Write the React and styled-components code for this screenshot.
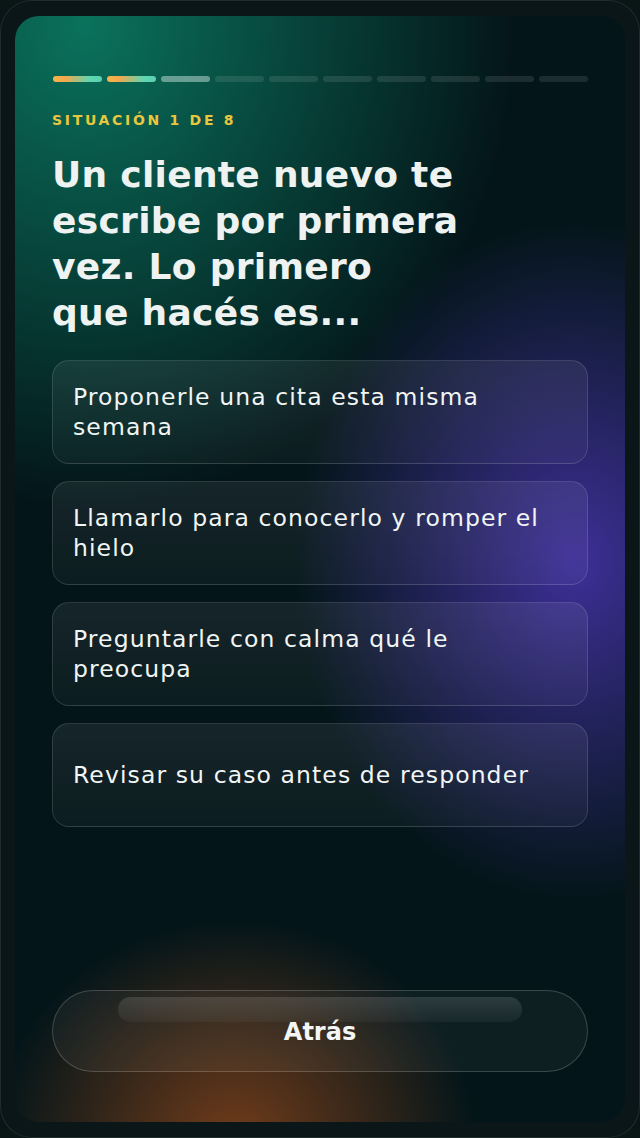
import React from "react";
import styled, { createGlobalStyle } from "styled-components";

const GlobalStyle = createGlobalStyle`
  html, body {
    margin: 0;
    padding: 0;
    background: #0a1516;
  }
  body {
    font-family: "DejaVu Sans", "Noto Sans", sans-serif;
    -webkit-font-smoothing: antialiased;
  }
`;

const Frame = styled.div`
  box-sizing: border-box;
  width: 640px;
  height: 1138px;
  padding: 15px 14px 15px 14px;
  border-radius: 32px;
  border: 1.5px solid rgba(255, 255, 255, 0.09);
  background: #0a1617;
  display: flex;
`;

const Card = styled.main`
  flex: 1;
  box-sizing: border-box;
  border-radius: 24px;
  padding: 60px 37px 50px 37px;
  display: flex;
  flex-direction: column;
  overflow: hidden;
  background:
    radial-gradient(ellipse 240px 220px at 220px 1125px, rgba(125, 64, 26, 0.9), rgba(125, 64, 26, 0) 100%),
    radial-gradient(ellipse 280px 340px at 560px 545px, rgba(68, 50, 165, 0.9), rgba(68, 50, 165, 0) 100%),
    radial-gradient(ellipse 430px 480px at 70px 10px, rgba(10, 114, 92, 1), rgba(10, 114, 92, 0) 100%),
    #041519;
`;

const Progress = styled.div`
  display: flex;
  gap: 5px;
  margin: 0 0 0 1px;
`;

const Segment = styled.div`
  flex: 1;
  height: 6px;
  border-radius: 3px;
  background: ${(p) =>
    p.$state === "done"
      ? "linear-gradient(90deg, #f6b54a 0%, #f2a84c 25%, #5fd6b2 75%, #5ccfb0 100%)"
      : p.$state === "current"
      ? "rgba(200, 225, 220, 0.5)"
      : "rgba(255, 255, 255, 0.1)"};
`;

const Label = styled.div`
  margin-top: 28px;
  color: #e9c63d;
  font-size: 14px;
  font-weight: 700;
  letter-spacing: 2.7px;
  line-height: 20px;
`;

const Question = styled.h1`
  margin: 22px 0 0 0;
  color: #eef3f1;
  font-size: 36px;
  font-weight: 700;
  line-height: 46px;
  letter-spacing: 0.3px;
`;

const Options = styled.div`
  margin-top: 24px;
  display: flex;
  flex-direction: column;
  gap: 17px;
`;

const Option = styled.button`
  box-sizing: border-box;
  min-height: 104px;
  padding: 0 20px;
  display: flex;
  align-items: center;
  text-align: left;
  border-radius: 17px;
  border: 1.5px solid rgba(255, 255, 255, 0.13);
  background: linear-gradient(180deg, rgba(255, 255, 255, 0.07), rgba(255, 255, 255, 0.035));
  color: #f1f5f3;
  font-family: "DejaVu Sans", "Noto Sans", sans-serif;
  font-size: 23.5px;
  font-weight: 400;
  letter-spacing: 1.1px;
  line-height: 30px;
  cursor: pointer;
`;

const Spacer = styled.div`
  flex: 1;
`;

const BackButton = styled.button`
  position: relative;
  box-sizing: border-box;
  height: 82px;
  border-radius: 41px;
  border: 1.5px solid rgba(255, 255, 255, 0.18);
  background: rgba(255, 255, 255, 0.045);
  color: #f4f6f5;
  font-family: "DejaVu Sans", "Noto Sans", sans-serif;
  font-size: 24px;
  font-weight: 700;
  cursor: pointer;
  display: flex;
  align-items: center;
  justify-content: center;
  padding-top: 2px;
`;

const Shine = styled.span`
  position: absolute;
  top: 6px;
  left: 65px;
  right: 65px;
  height: 25px;
  border-radius: 13px;
  background: linear-gradient(180deg, rgba(255, 255, 255, 0.13), rgba(255, 255, 255, 0.04));
`;

const steps = ["done", "done", "current", "todo", "todo", "todo", "todo", "todo", "todo", "todo"];

const answers = [
  "Proponerle una cita esta misma semana",
  "Llamarlo para conocerlo y romper el hielo",
  "Preguntarle con calma qué le preocupa",
  "Revisar su caso antes de responder",
];

export default function App() {
  return (
    <>
      <GlobalStyle />
      <Frame>
        <Card>
          <Progress>
            {steps.map((s, i) => (
              <Segment key={i} $state={s} />
            ))}
          </Progress>
          <Label>SITUACIÓN 1 DE 8</Label>
          <Question>
            Un cliente nuevo te
            <br />
            escribe por primera
            <br />
            vez. Lo primero
            <br />
            que hacés es...
          </Question>
          <Options>
            {answers.map((a) => (
              <Option key={a}>{a}</Option>
            ))}
          </Options>
          <Spacer />
          <BackButton>
            <Shine />
            Atrás
          </BackButton>
        </Card>
      </Frame>
    </>
  );
}
